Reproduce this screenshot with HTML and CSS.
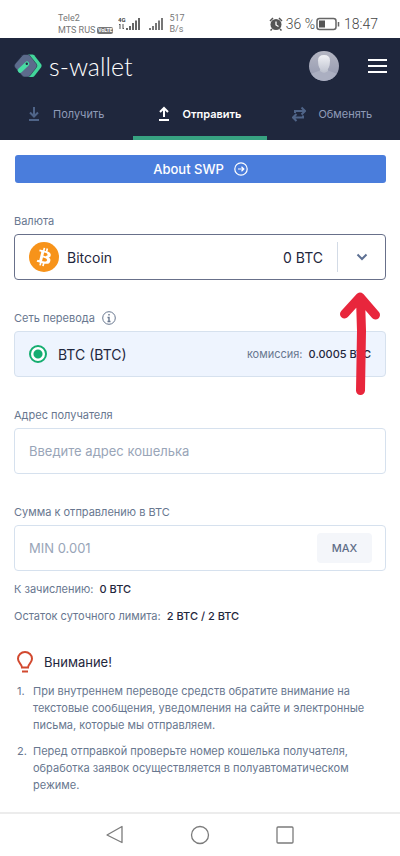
FILE: index.html
```html
<!DOCTYPE html>
<html lang="ru">
<head>
<meta charset="utf-8">
<meta name="viewport" content="width=device-width, initial-scale=1">
<title>s-wallet</title>
<link rel="stylesheet" href="styles.css">
</head>
<body>
<div class="status">
  <div class="status-left">
    <div class="carrier">
      <span>Tele2</span>
      <span class="carrier-row">MTS RUS <b class="volte">VoLTE</b></span>
    </div>
    <svg class="signal" width="22" height="16" viewBox="0 0 22 16" aria-hidden="true">
      <text x="0" y="6" class="net">4G</text>
      <path d="M2 8v5M1 9l1-1M5 8v5M5 13l1-1" stroke="#555" fill="none"/>
      <path d="M9 12v2M12 10v4M15 7v7M18 4.500v9.500M21 2v12" stroke="#666" stroke-width="2"/>
    </svg>
    <svg class="signal second" width="14" height="16" viewBox="0 0 14 16" aria-hidden="true">
      <path d="M1 12v2M4 10v4M7 7v7M10 4.500v9.500M13 2v12" stroke="#777" stroke-width="2"/>
    </svg>
    <div class="speed"><span>517</span><span>B/s</span></div>
  </div>
  <div class="status-right">
    <svg width="14" height="14" viewBox="0 0 14 14" aria-hidden="true">
      <circle cx="7" cy="7.500" r="5.500" fill="#555"/>
      <path d="M1 4l3-3M13 4l-3-3M3 12l-1.500 1.500M11 12l1.500 1.500" stroke="#555" stroke-width="1.500"/>
      <path d="M7 4.500V8l2.500 1.500" stroke="#fff" stroke-width="1.300" fill="none"/>
    </svg>
    <span class="percent">36 %</span>
    <svg width="24" height="14" viewBox="0 0 24 14" aria-hidden="true">
      <rect x="1" y="1.500" width="19" height="11" rx="2.500" fill="none" stroke="#666" stroke-width="1.500"/>
      <rect x="3" y="3.500" width="6" height="7" fill="#555"/>
      <path d="M22.500 5v4.500" stroke="#666" stroke-width="1.500"/>
    </svg>
    <span class="time">18:47</span>
  </div>
</div>

<header class="header">
  <div class="brand-row">
    <a class="brand" href="#">
      <svg width="28" height="24" viewBox="0 0 28 24" aria-hidden="true">
        <path d="M14 .5h4.500q1 0 1.700.8L27 10q1.200 1.700 0 3.400l-6.800 8.800q-.7.800-1.700.8H14z" fill="#42d69b"/>
        <path d="M8.500 1.300Q9.300.5 10.500.5h3q1.300 0 2.200 1l6.600 8.300q1.300 1.900 0 3.800l-6.600 8.400q-.9 1-2.200 1h-3q-1.200 0-2-.8L1 13.500q-1.300-1.800 0-3.600z" fill="#5c6b8c" stroke="#1f273d" stroke-width=".5"/>
        <path d="M6 16.500L13 9.800" stroke="#48dda3" stroke-width="4.600" stroke-linecap="round"/>
        <circle cx="12.800" cy="9.800" r="1.200" fill="#1f273d"/>
      </svg>
      <span>s-wallet</span>
    </a>
    <a class="avatar" href="#" aria-label="Профиль">
      <svg width="30" height="30" viewBox="0 0 30 30" aria-hidden="true">
        <defs>
          <linearGradient id="face" x1="0" y1="0" x2="0" y2="1"><stop offset="0" stop-color="#f0f1f5"/><stop offset="1" stop-color="#c3c7d3"/></linearGradient>
          <linearGradient id="back" x1="0" y1="0" x2="0" y2="1"><stop offset="0" stop-color="#b4b6c3"/><stop offset="1" stop-color="#9297ae"/></linearGradient>
          <clipPath id="disc"><circle cx="15" cy="15" r="15"/></clipPath>
        </defs>
        <g clip-path="url(#disc)">
          <path d="M0 0h30v30H0z" fill="url(#back)"/>
          <path d="M0 30v-5q1-2 4-3l7-2.500h8l7 2.500q3 1 4 3v5z" fill="#abafc1"/>
          <path d="M11 16v4q4 3.500 8 0v-4z" fill="#bfc3cf"/>
          <path d="M9 9.500Q9 4 15 4t6 5.500Q21 20 15 20T9 9.500z" fill="url(#face)"/>
        </g>
      </svg>
    </a>
    <button class="menu" type="button" aria-label="Меню"><i></i><i></i><i></i></button>
  </div>
  <nav class="tabs">
    <a class="tab" href="#">
      <svg width="14" height="16" viewBox="0 0 14 16" aria-hidden="true"><path d="M7 1v9M3 6.500L7 10.500l4-4M2 14h10" /></svg>
      <span>Получить</span>
    </a>
    <a class="tab active" href="#" aria-current="page">
      <svg width="14" height="16" viewBox="0 0 14 16" aria-hidden="true"><path d="M7 11V2M3 6l4-4 4 4M2 14h10"/></svg>
      <span>Отправить</span>
    </a>
    <a class="tab" href="#">
      <svg width="14" height="16" viewBox="0 0 14 16" aria-hidden="true"><path d="M3 7V5h10M9.500 1.500L13 5 9.500 8.500M11 9.500v2H1M4.500 8L1 11.500 4.500 15"/></svg>
      <span>Обменять</span>
    </a>
  </nav>
</header>

<main class="content">
  <a class="about" href="#">About SWP
    <svg width="14" height="14" viewBox="0 0 14 14" aria-hidden="true"><circle cx="7" cy="7" r="6.200"/><path d="M4 7h5.500M7.500 4.800L9.800 7 7.500 9.200"/></svg>
  </a>

  <div class="field">
    <label class="label" for="currency">Валюта</label>
    <div class="box currency">
      <svg class="coin" width="30" height="30" viewBox="0 0 32 32" aria-hidden="true">
        <circle cx="16" cy="16" r="16" fill="#f7931a"/>
        <path fill="#fff" d="M23.189 14.020c.314-2.096-1.283-3.223-3.465-3.975l.708-2.840-1.728-.430-.690 2.765c-.454-.114-.920-.220-1.385-.326l.695-2.783L15.596 6l-.708 2.839c-.376-.086-.746-.170-1.104-.260l.002-.009-2.384-.595-.460 1.846s1.283.294 1.256.312c.700.175.826.638.805 1.006l-.806 3.235c.048.012.110.030.180.057l-.183-.045-1.130 4.532c-.086.212-.303.531-.793.410.018.025-1.256-.313-1.256-.313l-.858 1.978 2.250.561c.418.105.828.215 1.231.318l-.715 2.872 1.727.430.708-2.840c.472.127.930.245 1.378.357l-.706 2.828 1.728.430.715-2.866c2.948.558 5.164.333 6.097-2.333.752-2.146-.037-3.385-1.588-4.192 1.130-.260 1.980-1.003 2.207-2.538zm-3.950 5.538c-.533 2.147-4.148.986-5.320.695l.950-3.805c1.172.293 4.929.872 4.370 3.110zm.535-5.569c-.487 1.953-3.495.960-4.470.717l.860-3.450c.975.243 4.118.696 3.610 2.733z"/>
      </svg>
      <select id="currency"><option>Bitcoin</option></select>
      <span class="balance">0 BTC</span>
      <span class="divider"></span>
      <svg class="chevron" width="12" height="8" viewBox="0 0 12 8" aria-hidden="true"><path d="M1.500 1.500l4.500 4.500 4.500-4.500"/></svg>
    </div>
  </div>

  <div class="field">
    <div class="label">Сеть перевода
      <svg class="info" width="14" height="14" viewBox="0 0 14 14" aria-hidden="true"><circle cx="7" cy="7" r="6.300"/><path d="M5.500 6.500H7v4M5.500 10.500h3M7 3v1.500" stroke-width="1.400"/></svg>
    </div>
    <div class="box network">
      <input type="radio" id="net-btc" name="network" checked>
      <label class="network-name" for="net-btc">BTC (BTC)</label>
      <span class="fee">комиссия: <b>0.0005 BTC</b></span>
      <svg class="arrow" width="42" height="106" viewBox="0 0 42 106" aria-hidden="true">
        <path d="M21.500 7L22.500 40L22 70L21.500 99.500M5.500 23L21 6L36.500 24"/>
      </svg>
    </div>
  </div>

  <div class="field">
    <label class="label" for="address">Адрес получателя</label>
    <div class="box"><input class="text" id="address" type="text" placeholder="Введите адрес кошелька"></div>
  </div>

  <div class="field">
    <label class="label" for="amount">Сумма к отправлению в BTC</label>
    <div class="box amount">
      <input class="text" id="amount" type="text" placeholder="MIN 0.001">
      <button class="max" type="button">MAX</button>
    </div>
  </div>

  <div class="totals">
    <p>К зачислению: <b>0 BTC</b></p>
    <p>Остаток суточного лимита: <b>2 BTC / 2 BTC</b></p>
  </div>

  <section class="notice">
    <h2>
      <svg width="16" height="22" viewBox="0 0 16 22" aria-hidden="true"><path d="M5 16.500C5 13 1 12 1 7.800A7 6.800 0 0 1 15 7.800C15 12 11 13 11 16.500zM5 20.500h6"/></svg>
      <span>Внимание!</span>
    </h2>
    <ol>
      <li>При внутреннем переводе средств обратите внимание на текстовые сообщения, уведомления на сайте и электронные письма, которые мы отправляем.</li>
      <li>Перед отправкой проверьте номер кошелька получателя, обработка заявок осуществляется в полуавтоматическом режиме.</li>
    </ol>
  </section>
</main>

<nav class="system">
  <button type="button" aria-label="Назад"><svg width="20" height="20" viewBox="0 0 20 20" aria-hidden="true"><path d="M17 1.500v16L2 10z"/></svg></button>
  <button type="button" aria-label="Домой"><svg width="20" height="20" viewBox="0 0 20 20" aria-hidden="true"><circle cx="10" cy="10" r="8.500"/></svg></button>
  <button type="button" aria-label="Недавние"><svg width="20" height="20" viewBox="0 0 20 20" aria-hidden="true"><rect x="2" y="2" width="16" height="16" rx="1"/></svg></button>
</nav>
</body>
</html>
```
FILE: styles.css
```css
* { box-sizing: border-box; }

body {
  margin: 0;
  min-height: 100vh;
  display: flex;
  flex-direction: column;
  background: #fff;
  color: #1f273d;
  font-family: Inter, "Liberation Sans", sans-serif;
  font-size: 11px;
}

svg { flex: none; display: block; }
a { color: inherit; text-decoration: none; }
button { border: 0; padding: 0; background: none; font-family: inherit; }

.status {
  height: 38px;
  padding: 10px 22px 0 58px;
  display: flex;
  justify-content: space-between;
  color: #777;
  font-family: Roboto, sans-serif;
}
.status-left, .status-right { display: flex; align-items: center; }
.carrier, .speed { display: flex; flex-direction: column; font-size: 9px; line-height: 12px; }
.carrier-row { display: flex; align-items: center; gap: 2px; }
.volte { background: #777; color: #fff; font-size: 5px; line-height: 7px; padding: 0 1px; border-radius: 2px; }
.signal { margin-left: 5px; }
.signal.second { margin-left: 9px; }
.net { font: bold 6px Roboto, sans-serif; fill: #444; }
.speed { margin-left: 6px; line-height: 11px; }
.status-right { font-size: 14px; font-weight: 300; color: #444; }
.percent { margin: 0 1px 0 3px; }
.time { margin-left: 4px; }

.header { background: #1f273d; color: #fff; }
.brand-row { height: 54px; padding: 2px 13px 0 14px; display: flex; align-items: center; }
.brand { flex: 1; display: flex; align-items: center; gap: 7px; font-family: Lato, sans-serif; font-size: 25px; font-weight: 300; line-height: 28px; color: #fff; }
.menu { width: 19px; margin-left: 29px; display: flex; flex-direction: column; gap: 4px; }
.menu i { height: 2px; background: #fff; }

.tabs { display: flex; }
.tab {
  flex: 1;
  height: 48px;
  border-bottom: 4px solid transparent;
  display: flex;
  align-items: center;
  justify-content: center;
  gap: 12px;
  padding-right: 2px;
  color: #8f9bb8;
}
.tab svg { fill: none; stroke: #4f6488; stroke-width: 2; }
.tab.active { color: #fff; font-weight: 600; border-color: #37a281; }
.tab.active svg { stroke: #fff; }

.content { flex: 1; padding: 15px 14px 0; }
.about {
  height: 28px;
  margin: 0 0 30px 1px;
  border-radius: 3px;
  background: #4a7ddc;
  color: #fff;
  font-size: 13px;
  font-weight: 500;
  display: flex;
  align-items: center;
  justify-content: center;
  gap: 10px;
}
.about svg { fill: none; stroke: #fff; stroke-width: 1.2; }

.field { margin-bottom: 30px; }
.label { display: flex; align-items: center; gap: 7px; line-height: 16px; margin-bottom: 5px; color: #68778f; }
.info { fill: none; stroke: #68778f; }
.box {
  height: 46px;
  padding: 0 14px;
  border: 1px solid #d6e1ee;
  border-radius: 4px;
  display: flex;
  align-items: center;
}
.currency { padding-right: 17px; border-color: #68708a; font-size: 14px; }
.currency select {
  flex: 1;
  min-width: 0;
  height: 30px;
  margin-left: 8px;
  padding: 0;
  border: 0;
  appearance: none;
  background: none;
  color: inherit;
  font: inherit;
}
.divider { width: 1px; height: 30px; margin: 0 18px 0 14px; background: #d3dbe6; }
.chevron { fill: none; stroke: #5d7093; stroke-width: 2; }

.network { position: relative; background: #eef4fe; }
.network input {
  appearance: none;
  width: 18px;
  height: 18px;
  margin: 0;
  border: 2px solid #15ad70;
  border-radius: 50%;
  background: radial-gradient(circle, #15ad70 4px, #fff 5px);
}
.network-name { flex: 1; margin-left: 11px; font-size: 14px; }
.fee { color: #68778f; }
.fee b { margin-left: 3px; color: #1f273d; font-weight: 500; }
.arrow { position: absolute; right: 4px; top: -41px; fill: none; stroke: #e8263c; stroke-width: 9; stroke-linecap: round; stroke-linejoin: round; }

.text { flex: 1; min-width: 0; padding: 0; border: 0; outline: 0; background: none; font: inherit; font-size: 13px; color: #1f273d; }
.text::placeholder { color: #99a5b8; opacity: 1; }
.max { width: 55px; height: 30px; border-radius: 4px; background: #f4f6fa; color: #5f6e88; font-size: 11px; font-weight: 500; }
.amount { padding-right: 13px; }

.totals { margin-top: -20px; display: flex; flex-direction: column; gap: 11px; color: #68778f; line-height: 16px; }
.totals p { margin: 0; }
.totals b { margin-left: 3px; color: #1f273d; font-weight: 500; }

.notice { margin-top: 27px; }
.notice h2 { display: flex; align-items: center; gap: 11px; margin: 0 0 10px; padding-left: 3px; font-size: 13px; line-height: 22px; font-weight: 400; }
.notice h2 svg { fill: none; stroke: #d2492f; stroke-width: 2; }
.notice ol { margin: 0; padding-left: 3px; list-style: none; counter-reset: item; color: #68778f; line-height: 17px; }
.notice li { display: grid; grid-template-columns: 16px 1fr; margin-bottom: 9px; }
.notice li::before { counter-increment: item; content: counter(item) "."; }

.system { height: 44px; border-top: 2px solid #ececec; display: flex; align-items: center; justify-content: center; gap: 65px; }
.system svg { fill: none; stroke: #7b7b7b; stroke-width: 1.3; stroke-linejoin: round; }
```
